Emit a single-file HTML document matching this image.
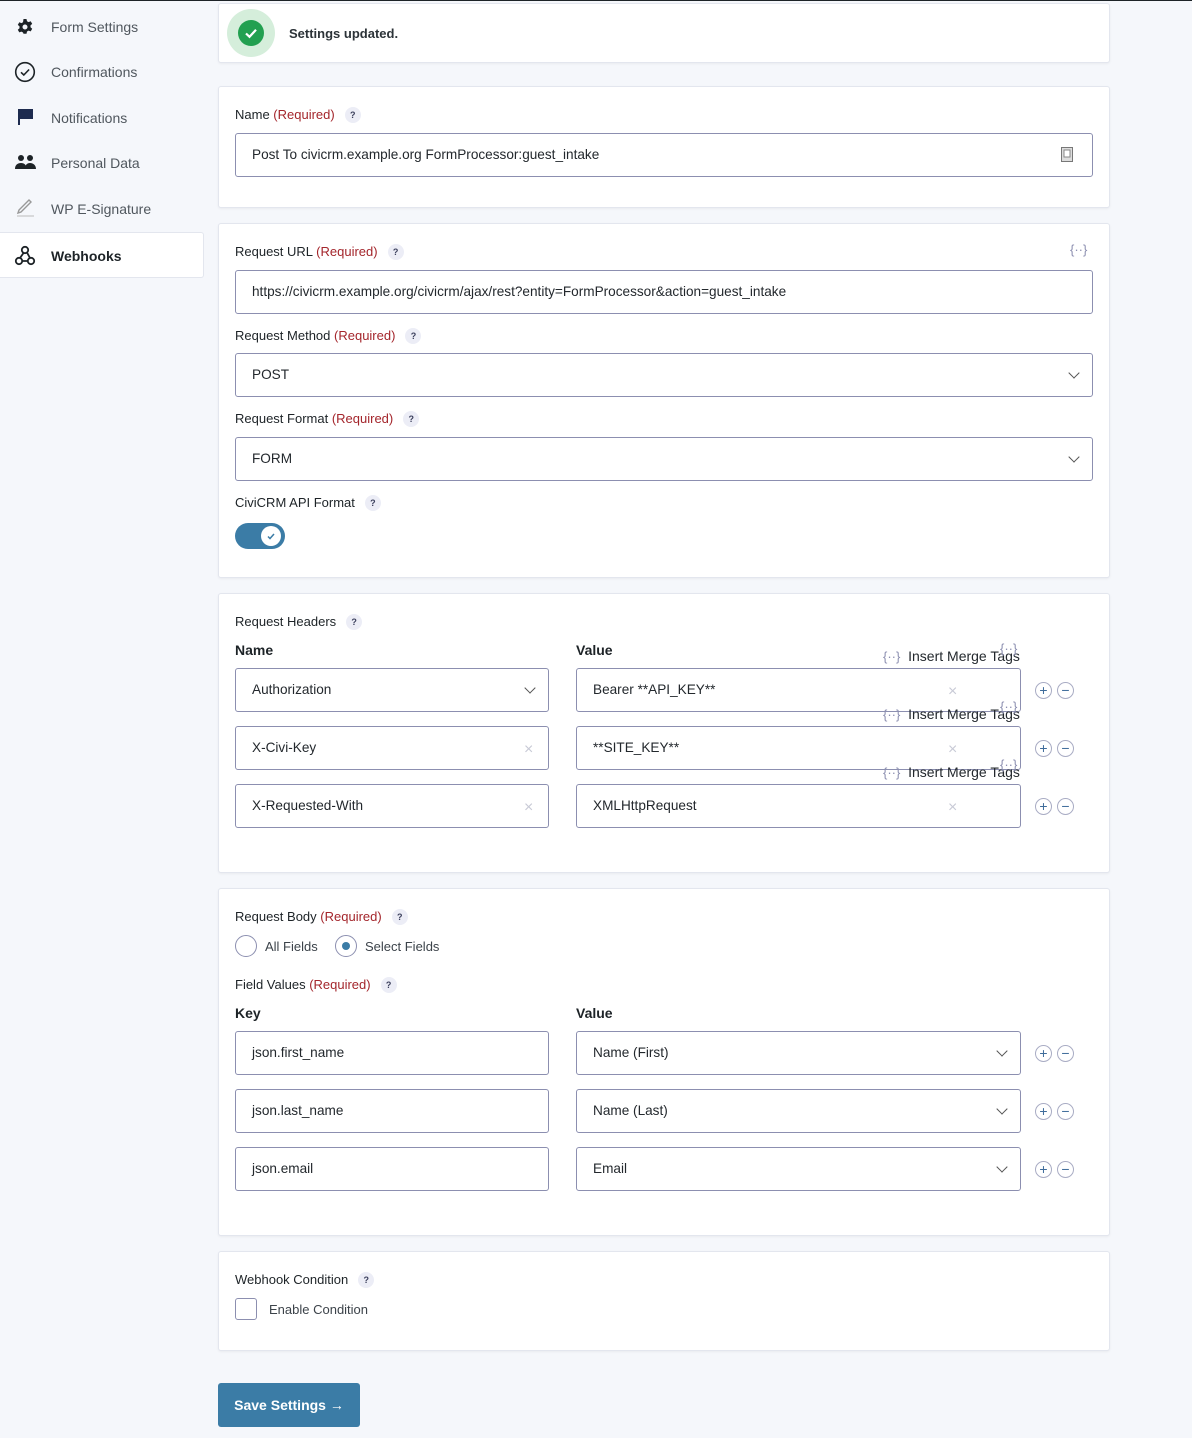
<!DOCTYPE html>
<html><head><meta charset="utf-8"><style>
*{box-sizing:border-box;margin:0;padding:0}
body{width:1192px;height:1438px;background:#f5f7fb;font-family:"Liberation Sans",sans-serif;color:#23282d;position:relative;overflow:hidden}
.a{position:absolute}
.p{position:absolute;left:218px;width:892px;background:#fff;border:1px solid #e3e6ee;border-radius:3px;box-shadow:0 1px 2px rgba(0,0,0,.05)}
.l{position:absolute;font-size:13px;color:#1d2327;white-space:nowrap}
.l .r{color:#a4262c}
.q{display:inline-block;width:16px;height:16px;border-radius:50%;background:#ecedf6;color:#3b3f5c;font-size:9px;text-align:center;line-height:16px;margin-left:10px;vertical-align:1px;font-weight:bold}
.in{position:absolute;height:44px;border:1px solid #8c8fb0;border-radius:3px;background:#fff;font-size:13.6px;color:#23282d;line-height:42px;padding-left:16px;white-space:nowrap}
.chev{position:absolute;right:14px;top:15px;width:8px;height:8px;border-right:1.5px solid #555;border-bottom:1.5px solid #555;transform:rotate(45deg)}
.x{position:absolute;font-size:16px;color:#c8cad6}
.h{position:absolute;font-size:14px;font-weight:bold;color:#1d2327}
.pm{position:absolute;width:17px;height:17px;border:1px solid #a9acc4;border-radius:50%;font-size:14px;line-height:14px;text-align:center;color:#3d6b9a}
.mt{position:absolute;font-size:14px;color:#23282d;white-space:nowrap}
.br{color:#8c8fb0;font-size:13px}
.nav{position:absolute;left:51px;font-size:14px;color:#50575e}
</style></head><body>
<div class="a" style="left:0;top:0;width:1192px;height:1px;background:#1d2327"></div>

<svg class="a" style="left:16px;top:18px" width="18" height="18" viewBox="0 0 18 18"><path fill="#1d2327" d="M7.5 1h3l.5 2.2 1.6.9 2.1-.8 1.5 2.6-1.7 1.5v1.9l1.7 1.5-1.5 2.6-2.1-.8-1.6.9-.5 2.2h-3L7 14.5l-1.6-.9-2.1.8-1.5-2.6 1.7-1.5V8.4L1.8 6.9l1.5-2.6 2.1.8L7 4.2zM9 6.5a2.5 2.5 0 100 5 2.5 2.5 0 000-5z"/></svg>
<div class="nav" style="top:19px">Form Settings</div>
<svg class="a" style="left:14px;top:61px" width="22" height="22" viewBox="0 0 22 22"><circle cx="11" cy="11" r="9.3" fill="none" stroke="#1d2327" stroke-width="1.6"/><path d="M7 11.3l2.8 2.7 5.3-5.5" fill="none" stroke="#1d2327" stroke-width="1.6"/></svg>
<div class="nav" style="top:64px">Confirmations</div>
<svg class="a" style="left:17px;top:108px" width="18" height="18" viewBox="0 0 18 18"><path fill="#1d2b4f" d="M1 1h2v16H1zM3 1h13v10H3z"/></svg>
<div class="nav" style="top:110px">Notifications</div>
<svg class="a" style="left:15px;top:154px" width="21" height="16" viewBox="0 0 21 16"><circle cx="6" cy="4" r="3" fill="#1d2327"/><circle cx="15" cy="4" r="3" fill="#1d2327"/><path fill="#1d2327" d="M0 15c0-4 2.5-6 6-6s5.5 2 5.5 6zM10 15c0-4 2-6 5-6s6 2 6 6z"/></svg>
<div class="nav" style="top:155px">Personal Data</div>
<svg class="a" style="left:16px;top:199px" width="19" height="18" viewBox="0 0 19 18"><path d="M2 14l1-3L13 1l2 2L5 13z" fill="none" stroke="#999" stroke-width="1.4"/><path d="M1 17h17" stroke="#bbb" stroke-width="1"/></svg>
<div class="nav" style="top:201px">WP E-Signature</div>
<div class="a" style="left:0;top:232px;width:204px;height:46px;background:#fff;border:1px solid #e3e6ee;border-left:none;border-radius:0 3px 3px 0"></div>
<svg class="a" style="left:14px;top:245px" width="22" height="22" viewBox="0 0 22 22" fill="none" stroke="#1d2327" stroke-width="1.8"><circle cx="11" cy="5" r="3.2"/><circle cx="5" cy="16" r="3.2"/><circle cx="17" cy="16" r="3.2"/><path d="M9.5 8L6 13M13 7.5l3 5.5M8 16h6"/></svg>
<div class="nav" style="top:248px;color:#1d2327;font-weight:bold">Webhooks</div>

<div class="p" style="top:3px;height:60px"></div>
<div class="a" style="left:227px;top:9px;width:48px;height:48px;border-radius:50%;background:#d5eedb"></div>
<div class="a" style="left:238px;top:20px;width:26px;height:26px;border-radius:50%;background:#22a050"></div>
<svg class="a" style="left:238px;top:20px" width="26" height="26"><path d="M8 13.5l3.5 3.3 6.5-7" fill="none" stroke="#fff" stroke-width="2.2"/></svg>
<div class="l" style="left:289px;top:26px;font-weight:bold;color:#2c3338">Settings updated.</div>

<div class="p" style="top:86px;height:122px"></div>
<div class="l" style="left:235px;top:107px">Name <span class="r">(Required)</span><span class="q">?</span></div>
<div class="in" style="left:235px;top:133px;width:858px">Post To civicrm.example.org FormProcessor:guest_intake</div>
<svg class="a" style="left:1061px;top:147px" width="12" height="15"><rect x="0.5" y="0.5" width="11" height="14" fill="#ddd" stroke="#777"/><rect x="3" y="3" width="6" height="7" fill="#fff" stroke="#888"/></svg>

<div class="p" style="top:223px;height:355px"></div>
<div class="l" style="left:235px;top:244px">Request URL <span class="r">(Required)</span><span class="q">?</span></div>
<div class="a br" style="left:1070px;top:242px">{··}</div>
<div class="in" style="left:235px;top:270px;width:858px">https://civicrm.example.org/civicrm/ajax/rest?entity=FormProcessor&amp;action=guest_intake</div>
<div class="l" style="left:235px;top:328px">Request Method <span class="r">(Required)</span><span class="q">?</span></div>
<div class="in" style="left:235px;top:353px;width:858px">POST<span class="chev"></span></div>
<div class="l" style="left:235px;top:411px">Request Format <span class="r">(Required)</span><span class="q">?</span></div>
<div class="in" style="left:235px;top:437px;width:858px">FORM<span class="chev"></span></div>
<div class="l" style="left:235px;top:495px">CiviCRM API Format<span class="q">?</span></div>
<div class="a" style="left:235px;top:523px;width:50px;height:26px;border-radius:13px;background:#3b7ca6"></div>
<div class="a" style="left:261px;top:526px;width:20px;height:20px;border-radius:50%;background:#fff"></div>
<svg class="a" style="left:261px;top:526px" width="20" height="20"><path d="M7 10.5l2 2 4-4.5" fill="none" stroke="#3b7ca6" stroke-width="1.5"/></svg>

<div class="p" style="top:593px;height:280px"></div>
<div class="l" style="left:235px;top:614px">Request Headers<span class="q">?</span></div>
<div class="h" style="left:235px;top:642px">Name</div>
<div class="h" style="left:576px;top:642px">Value</div>

<div class="in" style="left:235px;top:668px;width:314px">Authorization<span class="chev"></span></div>
<div class="in" style="left:576px;top:668px;width:445px">Bearer **API_KEY**</div>
<div class="x" style="left:948px;top:683px">×</div>
<div class="in" style="left:235px;top:726px;width:314px">X-Civi-Key</div>
<div class="x" style="left:524px;top:741px">×</div>
<div class="in" style="left:576px;top:726px;width:445px">**SITE_KEY**</div>
<div class="x" style="left:948px;top:741px">×</div>
<div class="in" style="left:235px;top:784px;width:314px">X-Requested-With</div>
<div class="x" style="left:524px;top:799px">×</div>
<div class="in" style="left:576px;top:784px;width:445px">XMLHttpRequest</div>
<div class="x" style="left:948px;top:799px">×</div>

<div class="mt" style="left:883px;top:648px"><span class="br">{··}</span> &nbsp;Insert Merge Tags</div>
<div class="a br" style="left:1000px;top:641px">{··}</div>
<div class="mt" style="left:883px;top:706px"><span class="br">{··}</span> &nbsp;Insert Merge Tags</div>
<div class="a br" style="left:1000px;top:699px">{··}</div>
<div class="mt" style="left:883px;top:764px"><span class="br">{··}</span> &nbsp;Insert Merge Tags</div>
<div class="a br" style="left:1000px;top:757px">{··}</div>

<div class="pm" style="left:1035px;top:682px">+</div><div class="pm" style="left:1057px;top:682px">−</div>
<div class="pm" style="left:1035px;top:740px">+</div><div class="pm" style="left:1057px;top:740px">−</div>
<div class="pm" style="left:1035px;top:798px">+</div><div class="pm" style="left:1057px;top:798px">−</div>

<div class="p" style="top:888px;height:348px"></div>
<div class="l" style="left:235px;top:909px">Request Body <span class="r">(Required)</span><span class="q">?</span></div>
<div class="a" style="left:235px;top:935px;width:22px;height:22px;border:1.5px solid #8c8fb0;border-radius:50%"></div>
<div class="l" style="left:265px;top:939px;color:#3c434a">All Fields</div>
<div class="a" style="left:335px;top:935px;width:22px;height:22px;border:1.5px solid #8c8fb0;border-radius:50%"></div>
<div class="a" style="left:342px;top:942px;width:8px;height:8px;background:#3b7ca6;border-radius:50%"></div>
<div class="l" style="left:365px;top:939px;color:#3c434a">Select Fields</div>
<div class="l" style="left:235px;top:977px">Field Values <span class="r">(Required)</span><span class="q">?</span></div>
<div class="h" style="left:235px;top:1005px">Key</div>
<div class="h" style="left:576px;top:1005px">Value</div>
<div class="in" style="left:235px;top:1031px;width:314px">json.first_name</div>
<div class="in" style="left:576px;top:1031px;width:445px">Name (First)<span class="chev"></span></div>
<div class="in" style="left:235px;top:1089px;width:314px">json.last_name</div>
<div class="in" style="left:576px;top:1089px;width:445px">Name (Last)<span class="chev"></span></div>
<div class="in" style="left:235px;top:1147px;width:314px">json.email</div>
<div class="in" style="left:576px;top:1147px;width:445px">Email<span class="chev"></span></div>
<div class="pm" style="left:1035px;top:1045px">+</div><div class="pm" style="left:1057px;top:1045px">−</div>
<div class="pm" style="left:1035px;top:1103px">+</div><div class="pm" style="left:1057px;top:1103px">−</div>
<div class="pm" style="left:1035px;top:1161px">+</div><div class="pm" style="left:1057px;top:1161px">−</div>

<div class="p" style="top:1251px;height:100px"></div>
<div class="l" style="left:235px;top:1272px">Webhook Condition<span class="q">?</span></div>
<div class="a" style="left:235px;top:1298px;width:22px;height:22px;border:1.5px solid #8c8fb0;border-radius:3px"></div>
<div class="l" style="left:269px;top:1302px;color:#3c434a">Enable Condition</div>

<div class="a" style="left:218px;top:1383px;width:142px;height:44px;background:#3b7ca6;border-radius:3px;color:#fff;font-weight:bold;font-size:14px;line-height:44px;text-align:center">Save Settings →</div>
</body></html>
